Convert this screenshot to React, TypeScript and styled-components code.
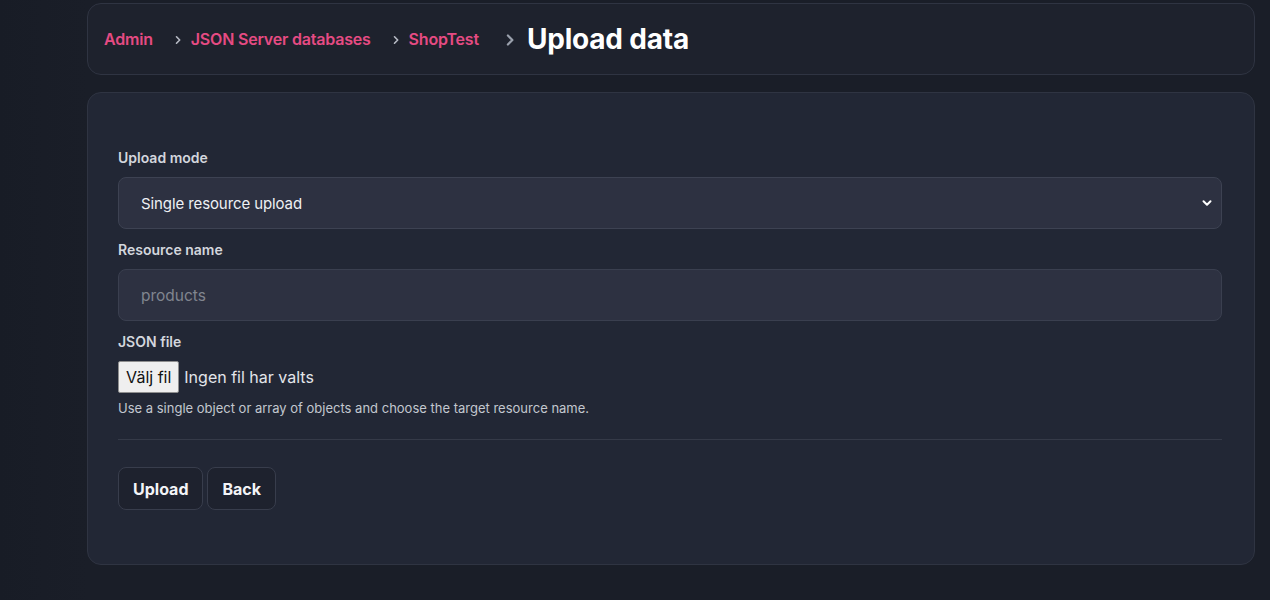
import styled, { createGlobalStyle } from "styled-components";

const GlobalStyle = createGlobalStyle`
	* {
		box-sizing: border-box;
	}

	body {
		margin: 0;
		background: #1a1e28;
		font-family: Inter, "Noto Sans", sans-serif;
		color: #e8eaef;
	}
`;

const crumbs = ["Admin", "JSON Server databases", "ShopTest"];

const Chevron = ({ size = 10 }: { size?: number }) => (
	<svg width={size} height={size} viewBox="0 0 10 10" fill="none">
		<path d="M3.5 1.8 L6.7 5 L3.5 8.2" stroke="currentColor" strokeWidth="1.6" strokeLinecap="round" strokeLinejoin="round" />
	</svg>
);

const SelectArrow = () => (
	<svg width="12" height="12" viewBox="0 0 12 12" fill="none">
		<path d="M2.5 4.2 L6 7.7 L9.5 4.2" stroke="#fff" strokeWidth="2" strokeLinecap="round" strokeLinejoin="round" />
	</svg>
);

const App = () => {
	return (
		<Page>
			<GlobalStyle />
			<Side />
			<Main>
				<HeaderCard>
					{crumbs.map((c, i) => (
						<Crumb key={c}>
							{i > 0 && (
								<Sep>
									<Chevron />
								</Sep>
							)}
							<CrumbLink>{c}</CrumbLink>
						</Crumb>
					))}
					<Crumb>
						<Sep $big>
							<Chevron size={14} />
						</Sep>
						<Title>Upload data</Title>
					</Crumb>
				</HeaderCard>

				<FormCard>
					<Field>
						<Label>Upload mode</Label>
						<SelectBox>
							<span>Single resource upload</span>
							<SelectArrow />
						</SelectBox>
					</Field>

					<Field>
						<Label>Resource name</Label>
						<TextInput placeholder="products" />
					</Field>

					<Field>
						<Label>JSON file</Label>
						<FileRow>
							<FileButton>Välj fil</FileButton>
							<FileText>Ingen fil har valts</FileText>
						</FileRow>
						<Help>Use a single object or array of objects and choose the target resource name.</Help>
					</Field>

					<Divider />

					<Actions>
						<Button>Upload</Button>
						<Button>Back</Button>
					</Actions>
				</FormCard>
			</Main>
		</Page>
	);
};

export default App;

const Page = styled.div`
	display: flex;
	min-height: 600px;
`;

const Side = styled.div`
	width: 87px;
	flex-shrink: 0;
	background: linear-gradient(90deg, #181c26 0%, #1a1e28 100%);
`;

const Main = styled.div`
	width: 1168px;
	padding-top: 3px;
	display: flex;
	flex-direction: column;
	gap: 17px;
`;

const HeaderCard = styled.div`
	height: 72px;
	display: flex;
	align-items: center;
	padding: 0 16px;
	border: 1px solid #2f3442;
	border-radius: 14px;
	background: #1e222d;
`;

const Crumb = styled.div`
	display: flex;
	align-items: center;
`;

const CrumbLink = styled.span`
	color: #e64b83;
	font-size: 16px;
	font-weight: 600;
	letter-spacing: -0.2px;
`;

const Sep = styled.span<{ $big?: boolean }>`
	display: flex;
	align-items: center;
	color: ${(p) => (p.$big ? "#9aa0ac" : "#b8bcc6")};
	margin: ${(p) => (p.$big ? "2px 10px 0 24px" : "1px 8px 0 20px")};
`;

const Title = styled.h1`
	margin: 0;
	font-size: 28px;
	font-weight: 700;
	color: #ffffff;
	letter-spacing: -0.2px;
`;

const FormCard = styled.div`
	height: 473px;
	padding: 55px 32px 0 30px;
	border: 1px solid #2f3442;
	border-radius: 14px;
	background: #222735;
	display: flex;
	flex-direction: column;
`;

const Field = styled.div`
	display: flex;
	flex-direction: column;
	margin-bottom: 11px;
`;

const Label = styled.label`
	font-size: 14px;
	line-height: 20px;
	font-weight: 600;
	color: #d3d6dd;
	margin-bottom: 9px;
`;

const SelectBox = styled.div`
	height: 52px;
	display: flex;
	align-items: center;
	justify-content: space-between;
	padding: 0 8px 0 22px;
	border: 1px solid #3d4252;
	border-radius: 8px;
	background: #2d3141;
	font-size: 15px;
	color: #eef0f4;
	letter-spacing: -0.1px;
`;

const TextInput = styled.input`
	height: 52px;
	padding: 0 22px;
	border: 1px solid #3a3f4f;
	border-radius: 8px;
	background: #2d3141;
	font-family: Inter, "Noto Sans", sans-serif;
	font-size: 15.5px;
	color: #eef0f4;
	outline: none;

	&::placeholder {
		color: #80858f;
	}
`;

const FileRow = styled.div`
	display: flex;
	align-items: center;
`;

const FileButton = styled.button`
	height: 32px;
	padding: 0 7px;
	border: 1px solid #8f8f8f;
	border-radius: 2px;
	background: #efefef;
	color: #111;
	font-family: Inter, "Noto Sans", sans-serif;
	font-size: 16px;
`;

const FileText = styled.span`
	margin-left: 5px;
	font-size: 16px;
	color: #e3e5ea;
`;

const Help = styled.div`
	margin-top: 6px;
	font-size: 13px;
	line-height: 18px;
	color: #c3c7cf;
`;

const Divider = styled.hr`
	width: 100%;
	margin: 11px 0 0;
	border: none;
	border-top: 1px solid #353a48;
`;

const Actions = styled.div`
	display: flex;
	gap: 4px;
	margin-top: 27px;
`;

const Button = styled.button`
	height: 43px;
	padding: 0 14px;
	border: 1px solid #383d4c;
	border-radius: 8px;
	background: #1e222e;
	color: #f3f4f7;
	font-family: Inter, "Noto Sans", sans-serif;
	font-size: 16px;
	font-weight: 700;
`;
